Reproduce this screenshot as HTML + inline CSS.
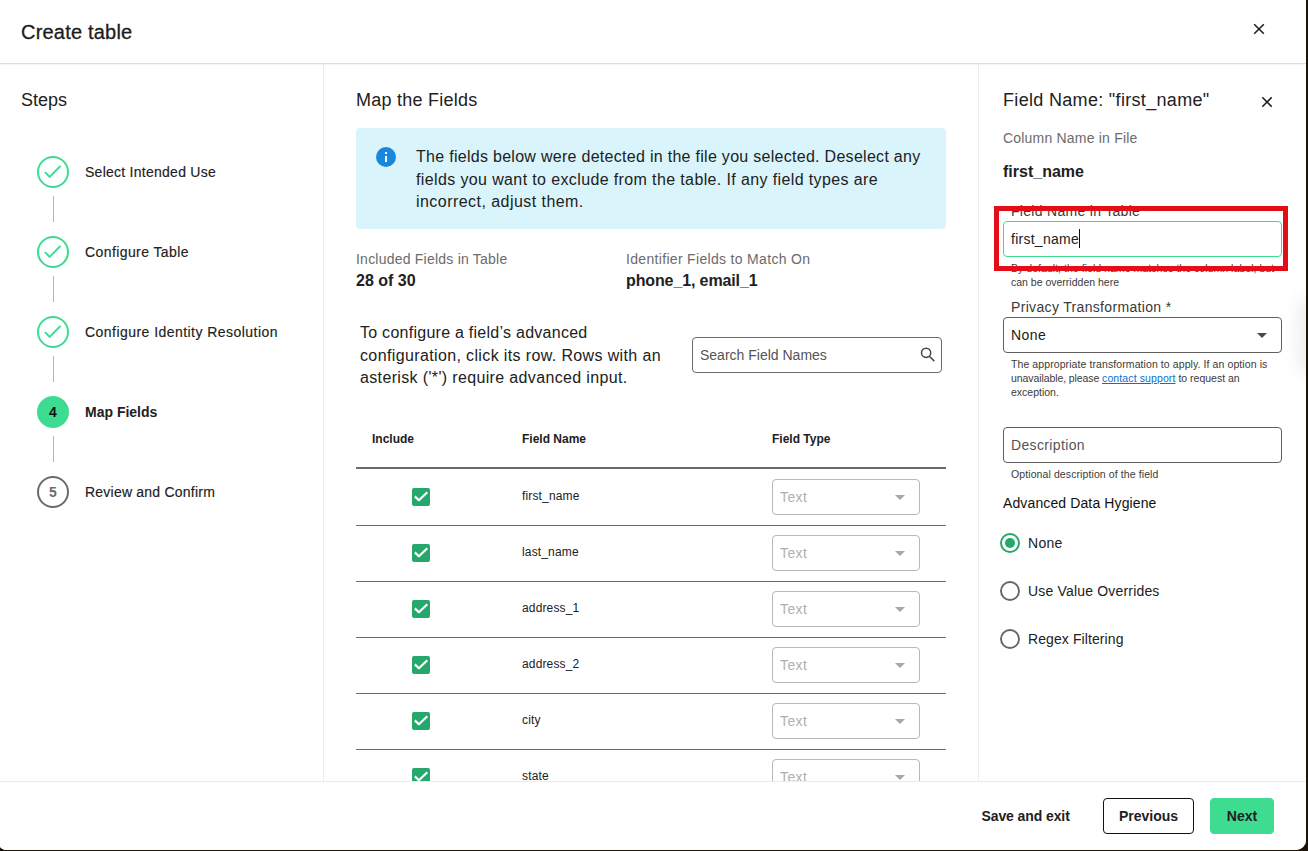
<!DOCTYPE html>
<html lang="en">
<head>
<meta charset="utf-8">
<title>Create table</title>
<style>
  * { box-sizing: border-box; margin: 0; padding: 0; }
  html, body { width: 1308px; height: 851px; overflow: hidden; background: #1b1209; }
  body { font-family: "Liberation Sans", sans-serif; color: #212121; position: relative; }
  .abs { position: absolute; white-space: nowrap; }
  #modal { position: absolute; left: 0; top: 0; width: 1306px; height: 850px; background: #fff;
           border-radius: 0 0 10px 7px / 0 0 10px 4px; overflow: hidden; }
  /* header */
  #hdr { position: absolute; left: 0; top: 0; width: 1306px; height: 64px; border-bottom: 1px solid #dedede;
         box-shadow: 0 0 2px rgba(0,0,0,0.13); background: #fff; z-index: 3; }
  #hdr h1 { position: absolute; left: 21px; top: 20px; font-size: 20px; line-height: 24px; font-weight: 400; color: #1c1c1c; letter-spacing: 0.2px; -webkit-text-stroke: 0.3px #1c1c1c; }
  /* panels */
  #left { position: absolute; left: 0; top: 64px; width: 324px; height: 718px; border-right: 1px solid #ececec; }
  #center { position: absolute; left: 324px; top: 64px; width: 654px; height: 717px; overflow: hidden; }
  #right { position: absolute; left: 978px; top: 64px; width: 328px; height: 718px; border-left: 1px solid #ececec; }
  #ftr { position: absolute; left: 0; top: 781px; width: 1306px; height: 69px; border-top: 1px solid #ebebeb; background: #fff; }
  .h2 { font-size: 18px; line-height: 24px; color: #212121; }
  /* steps */
  .circ { position: absolute; left: 37px; width: 32px; height: 32px; border-radius: 50%; border: 2px solid #3ddc91; }
  .circ svg { position: absolute; left: 2px; top: 2px; }
  .conn { position: absolute; left: 53px; width: 1px; height: 26px; background: #b5b5b5; }
  .num { position: absolute; left: 0; top: 0; width: 28px; height: 28px; line-height: 28px; text-align: center; font-size: 14px; }
  .slabel { position: absolute; left: 85px; font-size: 14px; line-height: 20px; color: #212121; white-space: nowrap; -webkit-text-stroke: 0.15px #212121; }

  /* center */
  #info { position: absolute; left: 32px; top: 64px; width: 590px; height: 101px; background: #d9f5fb; border-radius: 4px; }
  #info p { position: absolute; left: 60px; top: 18px; font-size: 16px; line-height: 22.5px; color: #212121; white-space: nowrap; }
  .lbl { font-size: 14px; line-height: 20px; color: #6b6b6b; }
  .val { font-size: 16px; line-height: 22px; font-weight: 700; color: #212121; }
  #cfg { position: absolute; left: 36px; top: 258px; font-size: 16px; line-height: 22.5px; color: #212121; white-space: nowrap; }
  #search { position: absolute; left: 368px; top: 273px; width: 250px; height: 36px; border: 1px solid #6b6b6b; border-radius: 4px; }
  #search span { position: absolute; left: 7px; top: 7px; font-size: 14px; line-height: 20px; color: #555; white-space: nowrap; }
  .th { position: absolute; top: 366px; font-size: 12px; line-height: 18px; font-weight: 700; color: #212121; white-space: nowrap; }
  #thline { position: absolute; left: 32px; top: 403px; width: 590px; height: 2px; background: #6b6b6b; }
  .row { position: absolute; left: 32px; width: 590px; height: 57px; border-bottom: 1px solid #6b6b6b; }
  .cb { position: absolute; left: 56px; top: 19px; width: 18px; height: 18px; border-radius: 2px; background: #26a76b; }
  .fn { letter-spacing: .15px; position: absolute; left: 166px; top: 18px; font-size: 12px; line-height: 18px; color: #212121; white-space: nowrap; }
  .sel { position: absolute; left: 416px; top: 10px; width: 148px; height: 36px; border: 1px solid #b8b8b8; border-radius: 4px; }
  .sel span { letter-spacing: .4px; position: absolute; left: 7px; top: 7px; font-size: 14px; line-height: 20px; color: #b0b0b0; }
  .sel i { position: absolute; left: 122px; top: 15px; width: 0; height: 0; border-left: 5px solid transparent; border-right: 5px solid transparent; border-top: 5px solid #a6a6a6; }

  /* right */
  .inp { position: absolute; left: 24px; width: 279px; height: 36px; border: 1px solid #5f5f5f; border-radius: 4px; background: #fff; }
  .inp span { position: absolute; left: 7px; top: 7px; font-size: 14px; line-height: 20px; color: #212121; white-space: nowrap; }
  .flbl { position: absolute; left: 32px; font-size: 14px; line-height: 20px; color: #3a3a3a; white-space: nowrap; }
  .help { position: absolute; left: 32px; font-size: 10.5px; line-height: 14px; color: #3a3a3a; white-space: nowrap; }
  .help a { color: #0b6fd1; text-decoration: underline; }
  .radio { position: absolute; left: 21px; width: 20px; height: 20px; }
  .rlbl { position: absolute; left: 49px; font-size: 14px; line-height: 20px; color: #212121; white-space: nowrap; }
  #redbox { position: absolute; left: 15px; top: 142px; width: 294px; height: 65px; border: 5px solid #e30f18; z-index: 5; }
  /* footer */
  .btn { position: absolute; top: 16px; height: 36px; border-radius: 4px; font-size: 14px; line-height: 34px; font-weight: 700; text-align: center; color: #212121; white-space: nowrap; }
</style>
</head>
<body>
<div id="modal">
  <div id="hdr">
    <h1>Create table</h1>
    <svg class="abs" style="left:1253px;top:23px" width="12" height="12" viewBox="0 0 12 12"><path d="M1.2 1.2 L10.8 10.8 M10.8 1.2 L1.2 10.8" stroke="#212121" stroke-width="1.6" fill="none"/></svg>
  </div>

  <div id="left">
    <div class="abs h2" style="left:21px;top:24px">Steps</div>
    <!-- step 1 -->
    <div class="circ" style="top:92px"><svg width="23" height="23" viewBox="0 0 24 24"><path d="M9 16.17L4.83 12l-1.42 1.41L9 19 21 7l-1.41-1.41z" fill="#3ddc91"/></svg></div>
    <div class="slabel" style="top:98px;letter-spacing:.26px">Select Intended Use</div>
    <div class="conn" style="top:132px"></div>
    <!-- step 2 -->
    <div class="circ" style="top:172px"><svg width="23" height="23" viewBox="0 0 24 24"><path d="M9 16.17L4.83 12l-1.42 1.41L9 19 21 7l-1.41-1.41z" fill="#3ddc91"/></svg></div>
    <div class="slabel" style="top:178px;letter-spacing:.41px">Configure Table</div>
    <div class="conn" style="top:212px"></div>
    <!-- step 3 -->
    <div class="circ" style="top:252px"><svg width="23" height="23" viewBox="0 0 24 24"><path d="M9 16.17L4.83 12l-1.42 1.41L9 19 21 7l-1.41-1.41z" fill="#3ddc91"/></svg></div>
    <div class="slabel" style="top:258px;letter-spacing:.455px">Configure Identity Resolution</div>
    <div class="conn" style="top:292px"></div>
    <!-- step 4 -->
    <div class="circ" style="top:332px;background:#3ddc91"><span class="num" style="color:#111;font-weight:700">4</span></div>
    <div class="slabel" style="top:338px;font-weight:700;-webkit-text-stroke:0">Map Fields</div>
    <div class="conn" style="top:372px"></div>
    <!-- step 5 -->
    <div class="circ" style="top:412px;border-color:#6b6b6b"><span class="num" style="color:#6b6b6b;font-weight:700">5</span></div>
    <div class="slabel" style="top:418px;letter-spacing:.22px">Review and Confirm</div>
  </div>

  <div id="center">
    <div class="abs h2" style="left:32px;top:24px;letter-spacing:.24px">Map the Fields</div>
    <div id="info">
      <svg class="abs" style="left:18px;top:17px" width="24" height="24" viewBox="0 0 24 24"><circle cx="12" cy="12" r="10" fill="#1a87de"/><rect x="11" y="11" width="2" height="6" fill="#fff"/><rect x="11" y="7" width="2" height="2" fill="#fff"/></svg>
      <p><span style="letter-spacing:.287px">The fields below were detected in the file you selected. Deselect any</span><br><span style="letter-spacing:.375px">fields you want to exclude from the table. If any field types are</span><br><span style="letter-spacing:.45px">incorrect, adjust them.</span></p>
    </div>
    <div class="abs lbl" style="left:32px;top:185px;letter-spacing:.225px">Included Fields in Table</div>
    <div class="abs val" style="left:32px;top:206px">28 of 30</div>
    <div class="abs lbl" style="left:302px;top:185px;letter-spacing:.32px">Identifier Fields to Match On</div>
    <div class="abs val" style="left:302px;top:206px;letter-spacing:-.12px">phone_1, email_1</div>
    <div id="cfg"><span style="letter-spacing:.26px">To configure a field’s advanced</span><br><span style="letter-spacing:.37px">configuration, click its row. Rows with an</span><br><span style="letter-spacing:.35px">asterisk ('*') require advanced input.</span></div>
    <div id="search"><span>Search Field Names</span>
      <svg class="abs" style="left:226px;top:8px" width="18" height="18" viewBox="0 0 18 18"><circle cx="7.1" cy="6.8" r="4.6" stroke="#444" stroke-width="1.5" fill="none"/><path d="M10.4 10.2 L15.3 15.1" stroke="#444" stroke-width="1.5"/></svg>
    </div>
    <div class="th" style="left:48px">Include</div>
    <div class="th" style="left:198px">Field Name</div>
    <div class="th" style="left:448px">Field Type</div>
    <div id="thline"></div>
    <div class="row" style="top:405px"><div class="cb"><svg width="18" height="18" viewBox="0 0 18 18"><path d="M2.8 8.4 L6.9 12.2 L15.3 4.2" stroke="#fff" stroke-width="2.2" fill="none"/></svg></div><div class="fn">first_name</div><div class="sel"><span>Text</span><i></i></div></div>
    <div class="row" style="top:461px"><div class="cb"><svg width="18" height="18" viewBox="0 0 18 18"><path d="M2.8 8.4 L6.9 12.2 L15.3 4.2" stroke="#fff" stroke-width="2.2" fill="none"/></svg></div><div class="fn">last_name</div><div class="sel"><span>Text</span><i></i></div></div>
    <div class="row" style="top:517px"><div class="cb"><svg width="18" height="18" viewBox="0 0 18 18"><path d="M2.8 8.4 L6.9 12.2 L15.3 4.2" stroke="#fff" stroke-width="2.2" fill="none"/></svg></div><div class="fn">address_1</div><div class="sel"><span>Text</span><i></i></div></div>
    <div class="row" style="top:573px"><div class="cb"><svg width="18" height="18" viewBox="0 0 18 18"><path d="M2.8 8.4 L6.9 12.2 L15.3 4.2" stroke="#fff" stroke-width="2.2" fill="none"/></svg></div><div class="fn">address_2</div><div class="sel"><span>Text</span><i></i></div></div>
    <div class="row" style="top:629px"><div class="cb"><svg width="18" height="18" viewBox="0 0 18 18"><path d="M2.8 8.4 L6.9 12.2 L15.3 4.2" stroke="#fff" stroke-width="2.2" fill="none"/></svg></div><div class="fn">city</div><div class="sel"><span>Text</span><i></i></div></div>
    <div class="row" style="top:685px"><div class="cb"><svg width="18" height="18" viewBox="0 0 18 18"><path d="M2.8 8.4 L6.9 12.2 L15.3 4.2" stroke="#fff" stroke-width="2.2" fill="none"/></svg></div><div class="fn">state</div><div class="sel"><span>Text</span><i></i></div></div>
  </div>

  <div id="right">
    <div class="abs h2" style="left:24px;top:24px;letter-spacing:.32px">Field Name: "first_name"</div>
    <svg class="abs" style="left:281.5px;top:32px" width="12" height="12" viewBox="0 0 12 12"><path d="M1.3 1.3 L10.7 10.7 M10.7 1.3 L1.3 10.7" stroke="#212121" stroke-width="1.6" fill="none"/></svg>
    <div class="abs" style="left:327px;top:236px;width:12px;height:72px;border-radius:6px;box-shadow:0 0 22px 2px rgba(0,0,0,.13)"></div>
    <div class="abs lbl" style="left:24px;top:64px;letter-spacing:.2px">Column Name in File</div>
    <div class="abs val" style="left:24px;top:97px">first_name</div>
    <div class="flbl" style="top:137px;letter-spacing:.3px">Field Name in Table *</div>
    <div class="inp" style="top:157px;border-color:#3ddc91"><span style="letter-spacing:.26px">first_name</span><b class="abs" style="left:75px;top:7px;width:1px;height:19px;background:#111"></b></div>
    <div class="help" style="top:197px"><span style="letter-spacing:.04px">By default, the field name matches the column label, but</span><br>can be overridden here</div>
    <div id="redbox"></div>
    <div class="flbl" style="top:233px;letter-spacing:.33px">Privacy Transformation *</div>
    <div class="inp" style="top:253px"><span style="letter-spacing:.4px">None</span><i class="abs" style="left:253px;top:15px;width:0;height:0;border-left:5px solid transparent;border-right:5px solid transparent;border-top:5px solid #484848"></i></div>
    <div class="help" style="top:293px"><span style="letter-spacing:.09px">The appropriate transformation to apply. If an option is</span><br><span style="letter-spacing:-.09px">unavailable, please </span><a style="letter-spacing:.11px">contact support</a> to request an<br>exception.</div>
    <div class="inp" style="top:363px"><span style="color:#555;letter-spacing:.36px">Description</span></div>
    <div class="help" style="top:403px;letter-spacing:.1px">Optional description of the field</div>
    <div class="abs" style="left:24px;top:429px;font-size:14px;line-height:20px;color:#111;letter-spacing:.12px">Advanced Data Hygiene</div>
    <div class="radio" style="top:469px"><svg width="20" height="20" viewBox="0 0 20 20"><circle cx="10" cy="10" r="9" fill="#fff" stroke="#26a76b" stroke-width="2"/><circle cx="10" cy="10" r="5" fill="#26a76b"/></svg></div><div class="rlbl" style="top:469px;letter-spacing:.3px">None</div>
    <div class="radio" style="top:517px"><svg width="20" height="20" viewBox="0 0 20 20"><circle cx="10" cy="10" r="9" fill="#fff" stroke="#666" stroke-width="1.9"/></svg></div><div class="rlbl" style="top:517px;letter-spacing:.18px">Use Value Overrides</div>
    <div class="radio" style="top:565px"><svg width="20" height="20" viewBox="0 0 20 20"><circle cx="10" cy="10" r="9" fill="#fff" stroke="#666" stroke-width="1.9"/></svg></div><div class="rlbl" style="top:565px;letter-spacing:.09px">Regex Filtering</div>
  </div>

  <div id="ftr">
    <div class="btn" style="left:980.5px;letter-spacing:-.1px;border:1px solid transparent">Save and exit</div>
    <div class="btn" style="left:1103px;width:91px;border:1px solid #111">Previous</div>
    <div class="btn" style="left:1210px;width:64px;background:#3ddc91;border:1px solid #3ddc91">Next</div>
  </div>
</div>
</body>
</html>
